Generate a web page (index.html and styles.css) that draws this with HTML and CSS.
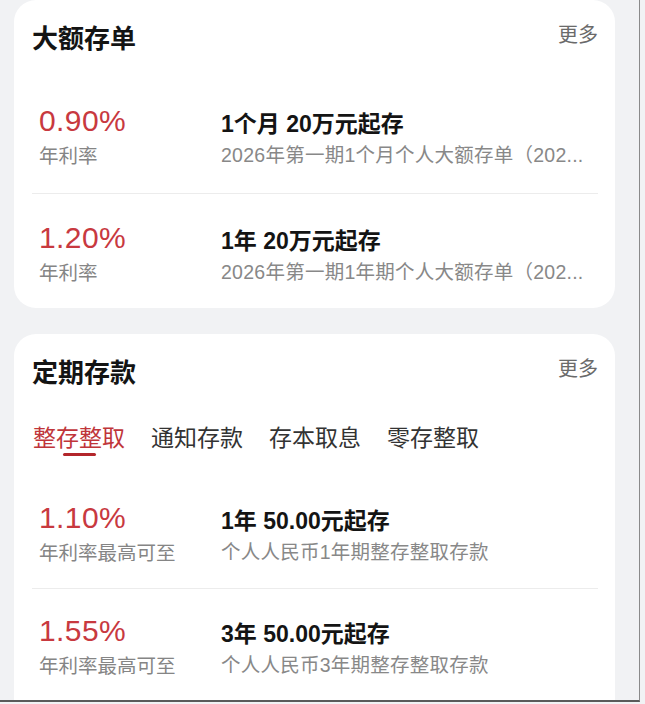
FILE: index.html
```html
<!DOCTYPE html>
<html lang="zh-CN">
<head>
<meta charset="utf-8">
<title>存款</title>
<link rel="stylesheet" href="styles.css">
</head>
<body>
<div class="screen">
  <section class="card card-cd">
    <header class="card-head">
      <h2 class="card-title">大额存单</h2>
      <span class="more">更多</span>
    </header>
    <div class="rows">
      <div class="row">
        <div class="col-rate">
          <div class="rate">0.90%</div>
          <div class="rate-label">年利率</div>
        </div>
        <div class="col-prod">
          <div class="prod-title">1个月 20万元起存</div>
          <div class="prod-desc">2026年第一期1个月个人大额存单（202...</div>
        </div>
      </div>
      <div class="row">
        <div class="col-rate">
          <div class="rate">1.20%</div>
          <div class="rate-label">年利率</div>
        </div>
        <div class="col-prod">
          <div class="prod-title">1年 20万元起存</div>
          <div class="prod-desc">2026年第一期1年期个人大额存单（202...</div>
        </div>
      </div>
    </div>
  </section>

  <section class="card card-fixed">
    <header class="card-head">
      <h2 class="card-title">定期存款</h2>
      <span class="more">更多</span>
    </header>
    <nav class="tabs">
      <span class="tab active">整存整取</span>
      <span class="tab">通知存款</span>
      <span class="tab">存本取息</span>
      <span class="tab">零存整取</span>
    </nav>
    <div class="rows">
      <div class="row">
        <div class="col-rate">
          <div class="rate">1.10%</div>
          <div class="rate-label">年利率最高可至</div>
        </div>
        <div class="col-prod">
          <div class="prod-title">1年 50.00元起存</div>
          <div class="prod-desc">个人人民币1年期整存整取存款</div>
        </div>
      </div>
      <div class="row">
        <div class="col-rate">
          <div class="rate">1.55%</div>
          <div class="rate-label">年利率最高可至</div>
        </div>
        <div class="col-prod">
          <div class="prod-title">3年 50.00元起存</div>
          <div class="prod-desc">个人人民币3年期整存整取存款</div>
        </div>
      </div>
    </div>
  </section>
</div>
</body>
</html>
```

FILE: styles.css
```css
* { box-sizing: border-box; }

html, body {
  margin: 0;
  padding: 0;
  background: #f1f2f4;
}

body {
  width: 645px;
  height: 704px;
  overflow: hidden;
  font-family: "Liberation Sans", "Noto Sans CJK SC", sans-serif;
  color: #1a1a1a;
}

.screen {
  width: 640px;
  height: 702px;
  overflow: hidden;
  background: #f1f2f4;
  border-right: 1px solid #8a8a8a;
  border-bottom: 2px solid #5a5a5a;
  padding: 0 24px 0 14px;
  display: flex;
  flex-direction: column;
  gap: 26px;
}

.card {
  background: #ffffff;
  border-radius: 22px;
  padding: 0 17px 0 18px;
  flex: none;
}

.card-cd {
  height: 308px;
}

.card-fixed {
  height: 420px;
}

.card-head {
  display: flex;
  justify-content: space-between;
  align-items: center;
  padding-top: 21px;
  height: 55px;
}

.card-title {
  margin: 0;
  font-size: 26px;
  line-height: 34px;
  font-weight: 700;
  font-family: "Noto Sans CJK SC", sans-serif;
  color: #141414;
  margin-top: -3px;
}

.more {
  font-size: 20px;
  line-height: 28px;
  color: #6a6a6a;
  font-family: "Noto Sans CJK SC", sans-serif;
  margin-top: -8px;
}

.card-cd .rows {
  margin-top: 22px;
}

.row {
  display: grid;
  grid-template-columns: 182px 1fr;
  padding: 27px 6px 24px 7px;
}

.row + .row {
  border-top: 1px solid #ececec;
}

.rate {
  font-size: 30px;
  line-height: 34px;
  color: #c8393f;
  letter-spacing: 0.4px;
}

.rate-label {
  margin-top: 3px;
  font-size: 19.5px;
  line-height: 28px;
  color: #858585;
  font-family: "Noto Sans CJK SC", sans-serif;
}

.col-prod {
  min-width: 0;
}

.prod-title {
  margin-top: 6px;
  font-size: 23px;
  line-height: 28px;
  font-weight: 700;
  color: #141414;
}

.prod-desc {
  margin-top: 3px;
  font-size: 19.5px;
  line-height: 28px;
  color: #888888;
  white-space: nowrap;
  letter-spacing: 0.25px;
}

.tabs {
  display: flex;
  gap: 26px;
  margin-top: 31px;
  padding-left: 1px;
  margin-bottom: 18px;
}

.tab {
  position: relative;
  font-size: 23px;
  line-height: 32px;
  color: #333333;
  font-family: "Noto Sans CJK SC", sans-serif;
  padding-bottom: 4px;
}

.tab.active {
  color: #c0353a;
}

.tab.active::after {
  content: "";
  position: absolute;
  left: 50%;
  bottom: 0;
  width: 33px;
  height: 3px;
  margin-left: -16px;
  border-radius: 2px;
  background: #b3262b;
}

.card-fixed .row {
  padding-top: 27px;
  padding-bottom: 22px;
}

.card-fixed .row + .row {
  padding-top: 25px;
}
```
